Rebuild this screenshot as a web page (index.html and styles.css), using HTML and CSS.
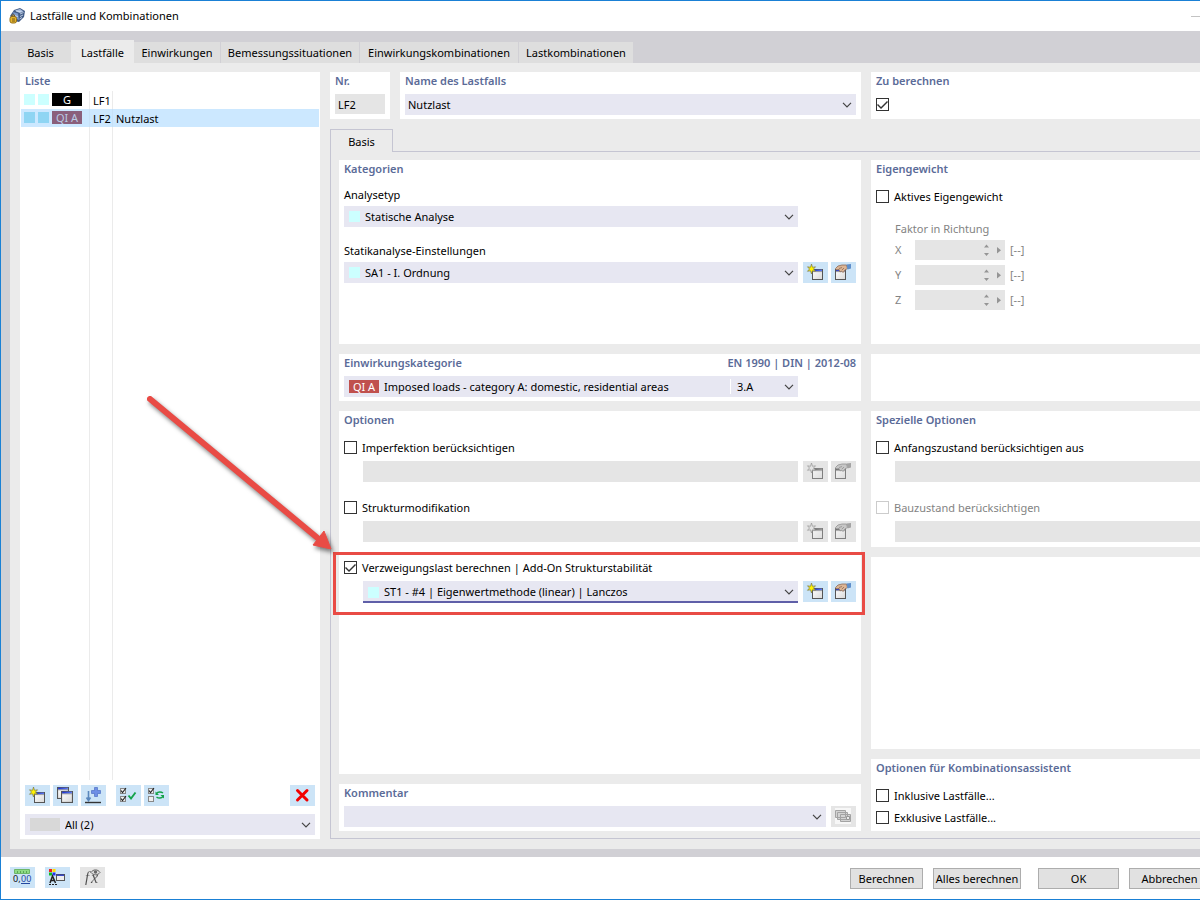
FILE: index.html
```html
<!DOCTYPE html>
<html lang="de">
<head>
<meta charset="utf-8">
<title>Lastfälle und Kombinationen</title>
<link rel="stylesheet" href="styles.css">
</head>
<body>
<svg class="defs" aria-hidden="true">
  <defs>
    <linearGradient id="face" x1="0" y1="0" x2="1" y2="1">
      <stop offset="0" stop-color="#ffffff"/><stop offset="1" stop-color="#d8d8d8"/>
    </linearGradient>
    <linearGradient id="bar" x1="0" y1="0" x2="1" y2="0">
      <stop offset="0" stop-color="#1c2fd0"/><stop offset="1" stop-color="#5c7cf4"/>
    </linearGradient>
    <symbol id="win" viewBox="0 0 11 11">
      <rect x=".5" y=".5" width="10" height="10" fill="url(#face)" stroke="#555"/>
      <path d="M1 .6h9v1.700H1z" fill="url(#bar)"/>
      <path d="M1 2.600h9" stroke="#777" stroke-width=".6"/>
    </symbol>
    <symbol id="i-new" viewBox="0 0 25 21">
      <use href="#win" x="9" y="7" width="11" height="11"/>
      <path d="M8.500 2 9.500 5.300 12.500 4.800 10.500 7 12.500 9.300 9.500 8.800 8.500 12 7.500 8.800 4.500 9.300 6.500 7 4.500 4.800 7.500 5.300z" fill="#fff200" stroke="#77774c" stroke-width=".7"/>
    </symbol>
    <symbol id="i-edit" viewBox="0 0 25 21">
      <use href="#win" x="4" y="7" width="11" height="11"/>
      <path d="M4.500 6.500 7 4 11 3 15.500 3 16.500 6.500 14 8 12 10.500 10.500 9 9 10 8 7.500 5.500 8z" fill="#dcb595" stroke="#8d6b55" stroke-width=".8"/>
      <path d="M8 6.500 11 5.500M11 8 13 6" stroke="#8d6b55" stroke-width=".8"/>
      <path d="M15.500 2.500 20 2v4.500l-3.500 1z" fill="#5f8fca"/>
    </symbol>
    <symbol id="i-copy" viewBox="0 0 25 21">
      <use href="#win" x="4" y="2" width="12" height="12"/>
      <use href="#win" x="8" y="6" width="12" height="12"/>
    </symbol>
    <symbol id="i-add" viewBox="0 0 25 21">
      <path d="M7.500 6v9M5.500 12.500 7.500 15.500 9.500 12.500" fill="none" stroke="#5a87bd" stroke-width="1.600"/>
      <path d="M13.500 2.500h3v3h3v3h-3v3h-3v-3h-3v-3h3z" fill="#6e8fe6" stroke="#4f70c4" stroke-width=".7"/>
      <path d="M4 17.500h16" stroke="#333" stroke-width="1.400"/>
    </symbol>
    <symbol id="box" viewBox="0 0 7 7"><rect x=".5" y=".5" width="5" height="5" fill="#eee" stroke="#888"/></symbol>
    <symbol id="i-all" viewBox="0 0 25 21">
      <use href="#box" x="4" y="3" width="7" height="7"/><use href="#box" x="4" y="11" width="7" height="7"/>
      <path d="M5 5.500 6.500 7.500 10 3M5 13.500 6.500 15.500 10 11" fill="none" stroke="#222" stroke-width="1.100"/>
      <path d="M12.500 10.500 15 13.500 19.500 7.500" fill="none" stroke="#13a34a" stroke-width="1.900"/>
    </symbol>
    <symbol id="i-invert" viewBox="0 0 25 21">
      <use href="#box" x="4" y="3" width="7" height="7"/><use href="#box" x="4" y="11" width="7" height="7"/>
      <path d="M5 5.500 6.500 7.500 10 3" fill="none" stroke="#222" stroke-width="1.100"/>
      <path d="M12.500 8.500C14 6.500 17 6.500 19 8M19 11.500C17.500 13.500 14.500 13.500 12.500 12" fill="none" stroke="#13a34a" stroke-width="1.500"/>
      <path d="M11.500 6.500v3.500h3.500zM20 13.500V10h-3.500z" fill="#13a34a"/>
    </symbol>
    <symbol id="i-delete" viewBox="0 0 25 21">
      <path d="M7.500 5.500 17 15M17 5.500 7.500 15" stroke="#f20000" stroke-width="3" stroke-linecap="round"/>
    </symbol>
    <symbol id="i-cards" viewBox="0 0 25 21">
      <path d="M4 2h16v16H4z" fill="#fff"/>
      <path d="M4.500 4.500h10v7h-10zM6.500 6.500h10v7h-10zM9.500 8.500h10v7h-10z" fill="#ccc" stroke="#888"/>
      <path d="M15.500 10.500h3v3h-3z" fill="#eee" stroke="#777"/>
    </symbol>
    <symbol id="chev" viewBox="0 0 10 6"><path d="M1 .8 5 4.800 9 .8" fill="none" stroke="#444" stroke-width="1.200"/></symbol>
    <symbol id="spin" viewBox="0 0 20 14">
      <path d="M0 4.500h5L2.500 1.500zM0 10h5l-2.500 3zM13 4v6.500l4-3.200z" fill="#959595"/>
    </symbol>
  </defs>
</svg>

<div class="dialog">
  <header class="titlebar">
    <svg class="logo" width="16" height="16" viewBox="0 0 16 16">
      <path d="M5 2 11 0 16 3 15 9 10 14 5 13 1 8z" fill="#435d88"/>
      <path d="M6 2.500 11 1 14.500 3.500 10.500 5z" fill="#a9bedf"/>
      <path d="M4 4 9 5.500 10 12 6 10z" fill="#7e9bcb"/>
      <path d="M11 6 14.500 4.500M11 8.500 14 7M10.500 11 13 9.500M3 7 9 8.500M7 3 12.500 4" stroke="#dbe5f5" stroke-width=".8"/>
      <rect x="1" y="8.500" width="6.500" height="6.500" rx="2" fill="#e5b52c" stroke="#94701a"/>
      <path d="M3 8.500V7h2.500v1.500M3 11h3M3 13h3" fill="none" stroke="#76581a"/>
    </svg>
    <h1 class="caption">Lastfälle und Kombinationen</h1>
    <button class="minimize" aria-label="Minimieren"></button>
  </header>

  <nav class="tabs">
    <button class="tab t-basis">Basis</button>
    <button class="tab active">Lastfälle</button>
    <button class="tab t-einw">Einwirkungen</button>
    <button class="tab t-bem">Bemessungssituationen</button>
    <button class="tab t-komb">Einwirkungskombinationen</button>
    <button class="tab t-last">Lastkombinationen</button>
  </nav>

  <main class="content">
    <section class="card list">
      <h2 class="title">Liste</h2>
      <table class="cases">
        <tbody>
          <tr><td class="c-type"><div class="marks"><i class="mark"></i><i class="mark"></i><span class="tag tag-g">G</span></div></td><td class="c-no">LF1</td><td class="c-name"></td></tr>
          <tr class="selected"><td class="c-type"><div class="marks"><i class="mark"></i><i class="mark"></i><span class="tag tag-q">QI A</span></div></td><td class="c-no">LF2</td><td class="c-name">Nutzlast</td></tr>
          <tr class="rest"><td class="c-type"></td><td class="c-no"></td><td class="c-name"></td></tr>
        </tbody>
      </table>
      <div class="tools">
        <button class="ib" aria-label="Neu"><svg><use href="#i-new"/></svg></button>
        <button class="ib" aria-label="Kopieren"><svg><use href="#i-copy"/></svg></button>
        <button class="ib" aria-label="Hinzufügen"><svg><use href="#i-add"/></svg></button>
        <button class="ib apart" aria-label="Alle auswählen"><svg><use href="#i-all"/></svg></button>
        <button class="ib" aria-label="Auswahl umkehren"><svg><use href="#i-invert"/></svg></button>
        <button class="ib last" aria-label="Löschen"><svg><use href="#i-delete"/></svg></button>
      </div>
      <div class="combo"><i class="block"></i><select aria-label="Filter"><option>All (2)</option></select><svg class="chev"><use href="#chev"/></svg></div>
    </section>

    <div class="detail">
      <div class="head">
        <section class="card">
          <label class="title" for="nr">Nr.</label>
          <input id="nr" class="number" value="LF2" readonly>
        </section>
        <section class="card">
          <label class="title" for="name">Name des Lastfalls</label>
          <div class="combo"><select id="name"><option>Nutzlast</option></select><svg class="chev"><use href="#chev"/></svg></div>
        </section>
        <section class="card">
          <label class="title" for="calc">Zu berechnen</label>
          <div class="single"><input type="checkbox" id="calc" checked></div>
        </section>
      </div>

      <div class="subtabs"><button class="subtab">Basis</button></div>

      <div class="frame">
        <div class="col">
          <section class="card tall">
            <h2 class="title">Kategorien</h2>
            <div class="fields">
              <div class="field">
                <label for="typ">Analysetyp</label>
                <div class="row wide"><div class="combo"><i class="mark"></i><select id="typ"><option>Statische Analyse</option></select><svg class="chev"><use href="#chev"/></svg></div></div>
              </div>
              <div class="field">
                <label for="sa">Statikanalyse-Einstellungen</label>
                <div class="row">
                  <div class="combo"><i class="mark"></i><select id="sa"><option>SA1 - I. Ordnung</option></select><svg class="chev"><use href="#chev"/></svg></div>
                  <div class="pair"><button class="ib" aria-label="Neu"><svg><use href="#i-new"/></svg></button><button class="ib" aria-label="Bearbeiten"><svg><use href="#i-edit"/></svg></button></div>
                </div>
              </div>
            </div>
          </section>

          <section class="card">
            <div class="title split"><label for="cat">Einwirkungskategorie</label><span>EN 1990 | DIN | 2012-08</span></div>
            <div class="row wide"><div class="combo"><span class="tag tag-red">QI A</span><select id="cat"><option>Imposed loads - category A: domestic, residential areas</option></select><span class="code">3.A</span><svg class="chev"><use href="#chev"/></svg></div></div>
          </section>

          <section class="card grow">
            <h2 class="title">Optionen</h2>
            <div class="options">
              <div class="option">
                <label class="check"><input type="checkbox">Imperfektion berücksichtigen</label>
                <div class="row indent">
                  <select class="blank" aria-label="Imperfektion" disabled></select>
                  <div class="pair"><button class="ib" disabled aria-label="Neu"><svg><use href="#i-new"/></svg></button><button class="ib" disabled aria-label="Bearbeiten"><svg><use href="#i-edit"/></svg></button></div>
                </div>
              </div>
              <div class="option">
                <label class="check"><input type="checkbox">Strukturmodifikation</label>
                <div class="row indent">
                  <select class="blank" aria-label="Strukturmodifikation" disabled></select>
                  <div class="pair"><button class="ib" disabled aria-label="Neu"><svg><use href="#i-new"/></svg></button><button class="ib" disabled aria-label="Bearbeiten"><svg><use href="#i-edit"/></svg></button></div>
                </div>
              </div>
              <div class="option">
                <label class="check"><input type="checkbox" checked>Verzweigungslast berechnen | Add-On Strukturstabilität</label>
                <div class="row indent">
                  <div class="combo focus"><i class="mark"></i><select aria-label="Stabilitätsanalyse"><option>ST1 - #4 | Eigenwertmethode (linear) | Lanczos</option></select><svg class="chev"><use href="#chev"/></svg></div>
                  <div class="pair"><button class="ib" aria-label="Neu"><svg><use href="#i-new"/></svg></button><button class="ib" aria-label="Bearbeiten"><svg><use href="#i-edit"/></svg></button></div>
                </div>
                <div class="callout"></div>
                <svg class="arrow" viewBox="0 0 200 170" aria-hidden="true">
                  <path d="M10 10 180 151" stroke="#e94b45" stroke-width="6" stroke-linecap="round"/>
                  <path d="M191 160 173 156 184 142z" fill="#e94b45" stroke="#e94b45"/>
                </svg>
              </div>
            </div>
          </section>

          <section class="card">
            <label class="title" for="note">Kommentar</label>
            <div class="row">
              <div class="combo"><select id="note"><option></option></select><svg class="chev"><use href="#chev"/></svg></div>
              <button class="ib" disabled aria-label="Kommentare"><svg><use href="#i-cards"/></svg></button>
            </div>
          </section>
        </div>

        <div class="col">
          <section class="card tall">
            <h2 class="title">Eigengewicht</h2>
            <div class="options">
              <label class="check"><input type="checkbox">Aktives Eigengewicht</label>
            </div>
            <div class="factors">
              <p class="hint">Faktor in Richtung</p>
              <div class="factor"><label for="fx">X</label><div class="spin"><input id="fx" disabled><svg><use href="#spin"/></svg></div><span>[--]</span></div>
              <div class="factor"><label for="fy">Y</label><div class="spin"><input id="fy" disabled><svg><use href="#spin"/></svg></div><span>[--]</span></div>
              <div class="factor"><label for="fz">Z</label><div class="spin"><input id="fz" disabled><svg><use href="#spin"/></svg></div><span>[--]</span></div>
            </div>
          </section>
          <section class="card short"></section>
          <section class="card special">
            <h2 class="title">Spezielle Optionen</h2>
            <div class="options">
              <div class="option">
                <label class="check"><input type="checkbox">Anfangszustand berücksichtigen aus</label>
                <div class="row indent"><select class="blank" aria-label="Anfangszustand" disabled></select></div>
              </div>
              <div class="option">
                <label class="check off"><input type="checkbox" disabled>Bauzustand berücksichtigen</label>
                <div class="row indent"><select class="blank" aria-label="Bauzustand" disabled></select></div>
              </div>
            </div>
          </section>
          <section class="card grow"></section>
          <section class="card">
            <h2 class="title">Optionen für Kombinationsassistent</h2>
            <div class="options tight">
              <label class="check"><input type="checkbox">Inklusive Lastfälle...</label>
              <label class="check"><input type="checkbox">Exklusive Lastfälle...</label>
            </div>
          </section>
        </div>
      </div>
    </div>
  </main>

  <footer class="footer">
    <div class="foot-tools">
      <button class="ib" aria-label="Einheiten und Dezimalstellen">
        <svg viewBox="0 0 25 21"><path d="M4.500 2.500h15v4h-15z" fill="#8edb86" stroke="#6cb768"/><path d="M7.500 4v2M10.500 4v2M13.500 4v2M16.500 4v2" stroke="#5aa657"/><text x="3" y="15" class="g-num">0,</text><text x="11" y="15" class="g-num g-blue">00</text><path d="M11 16.500h9" stroke="#2548a0"/></svg>
      </button>
      <button class="ib" aria-label="Anzeige">
        <svg viewBox="0 0 25 21"><path d="M4 2h3v3H4z" fill="#e22"/><path d="M7.500 2h3v3h-3z" fill="#fd0"/><path d="M4 5.500h3v3H4z" fill="#1b2"/><path d="M7.500 5.500h3v3h-3z" fill="#23e"/><path d="M5 16 7.500 9 10.500 16M6 13.500h4" fill="none" stroke="#222" stroke-width="1.500"/><path d="M4 17.500h9" stroke="#222" stroke-dasharray="2 1"/><rect x="11.500" y="7.500" width="8" height="6" fill="#eee" stroke="#555"/><path d="M12 8.200h7" stroke="#2638c0" stroke-width="1.400"/></svg>
      </button>
      <button class="ib" disabled aria-label="Formel">
        <svg viewBox="0 0 25 21"><text x="5" y="15" class="g-fx">f</text><text x="11" y="16" class="g-fx g-x">x</text><path d="M11 5.500C13 2 18 2 20 5.500 18 8.500 13 8.500 11 5.500z" fill="#ddd" stroke="#333"/><circle cx="15.500" cy="5" r="1.700" fill="#333"/></svg>
      </button>
    </div>
    <div class="actions">
      <button class="btn b-calc">Berechnen</button>
      <button class="btn b-all">Alles berechnen</button>
      <button class="btn b-ok">OK</button>
      <button class="btn b-cancel">Abbrechen</button>
    </div>
  </footer>
</div>
</body>
</html>
```
FILE: styles.css
```css
* { box-sizing: border-box; }

body {
  margin: 0;
  overflow: hidden;
  font: 11px/18px "Noto Sans", "Open Sans", sans-serif;
  color: #000;
}

button, input, select { font: inherit; color: inherit; margin: 0; padding: 0; border: 0; border-radius: 0; }
h1, h2, p { margin: 0; font: inherit; }
svg { display: block; }
.defs { position: absolute; width: 0; height: 0; }

/* The dialog runs on past the right edge of the window. */
.dialog {
  display: flex;
  flex-direction: column;
  width: calc(100% + 40px);
  min-height: 100vh;
  border: 1px solid #1a80d5;
  background: #d1d0d5;
}

.titlebar { display: flex; align-items: center; height: 30px; padding: 0 38px 0 8px; background: #fff; }
.caption { flex: 1; margin-left: 5px; }
.minimize { width: 10px; height: 1px; background: #c3c3c3; }

.tabs { display: flex; align-items: flex-end; height: 32px; padding-left: 9px; }
.tab { height: 21px; background: #dedede; border-right: 1px solid #d1d0d5; white-space: nowrap; }
.t-basis { width: 61px; border-right: 0; }
.t-einw { width: 87px; }
.t-bem { width: 139px; }
.t-komb { width: 159px; }
.t-last { width: 115px; }
.tab.active { width: 63px; height: 23px; padding-top: 2px; background: #ebebeb; border-right: 0; }

.content { flex: 1; display: flex; gap: 10px; margin: 0 0 8px 9px; padding: 9px 9px 10px 10px; background: #ebebeb; }

.card { display: flex; flex-direction: column; padding: 0 5px 4px; background: #fff; min-width: 0; }
.title { display: block; margin-bottom: 4px; font-weight: 600; color: #5b6b98; white-space: nowrap; }
.split { display: flex; justify-content: space-between; }
.tall { min-height: 184px; }
.short { min-height: 47px; }
.special { padding-bottom: 5px; }
.grow { flex: 1; }

.list { width: 300px; }
.list .title { margin-bottom: 1px; }
.cases { flex: 1; display: flex; flex-direction: column; margin: 0 -4px 5px; }
.cases tbody { flex: 1; display: flex; flex-direction: column; }
.cases tr { display: flex; height: 18px; }
.cases .rest { flex: 1; }
.cases td { padding: 1px 0 0 3px; }
.cases .c-type { width: 69px; padding: 2px 0 0 3px; border-right: 1px solid #ebebeb; }
.cases .c-no { width: 23px; border-right: 1px solid #ebebeb; }
.cases .c-name { flex: 1; }
.selected { background: #cce8ff; }
.cases .selected .c-type, .cases .selected .c-no { border-color: #c7e1f7; }
.marks { display: flex; gap: 3px; }
.mark { flex: none; width: 11px; height: 11px; background: #ccffff; }
.marks .mark { margin-top: 1px; }
.selected .mark { background: #8fd5f3; }
.tag { flex: none; width: 30px; height: 13px; line-height: 13px; text-align: center; }
.tag-g { background: #000; color: #fff; }
.tag-q { background: #8a5f7b; color: #b9cbe5; }
.tag-red { background: #c0504d; color: #fff; }

.tools { display: flex; gap: 3px; margin-bottom: 8px; }
.apart { margin-left: 7px; }
.last { margin-left: auto; }
.ib { flex: none; width: 25px; height: 21px; background: #cce4f7; }
.ib svg { width: 25px; height: 21px; }
.ib:disabled { background: #e5e5e5; }
.ib:disabled svg { filter: grayscale(1); opacity: .7; }

.combo { flex: none; display: flex; align-items: center; height: 21px; padding: 0 4px 0 3px; background: #e7e7f2; }
.row .combo { flex: 1; min-width: 0; padding-left: 5px; }
.combo select { flex: 1; min-width: 0; height: 21px; appearance: none; background: none; }
.combo .mark + select, .combo .tag + select { margin-left: 5px; }
.chev { flex: none; width: 10px; height: 6px; }
.block { width: 30px; height: 13px; margin: 0 5px 0 2px; background: #d8d8d8; }
.row .focus { height: 22px; margin-bottom: -1px; box-shadow: inset 0 -2px #5f5fa8; }
.code { width: 54px; height: 15px; line-height: 15px; padding-left: 6px; border-left: 1px solid #fff; }

.detail { flex: 1; min-width: 0; display: flex; flex-direction: column; }
.head { display: grid; grid-template-columns: 60px minmax(0, 461px) minmax(0, 1fr); gap: 10px; }
.number { width: 100%; height: 20px; padding-left: 3px; background: #e5e5e5; }
.single { display: flex; align-items: center; height: 21px; }

.subtabs { display: flex; height: 23px; margin-top: 10px; }
.subtabs::after { content: ""; flex: 1; border-bottom: 1px solid #c5c5d2; }
.subtab { width: 63px; padding-top: 2px; background: none; border: 1px solid #c5c5d2; border-bottom: 0; }
.frame {
  flex: 1;
  display: grid;
  grid-template-columns: minmax(0, 522px) minmax(0, 1fr);
  gap: 10px;
  padding: 8px 8px 7px;
  border: 1px solid #c5c5d2;
  border-top: 0;
}
.col { display: flex; flex-direction: column; gap: 10px; min-width: 0; }

.fields { display: flex; flex-direction: column; gap: 15px; margin-top: 4px; }
.field { display: flex; flex-direction: column; gap: 2px; }
.row { display: flex; gap: 5px; }
.wide { padding-right: 58px; }
.indent { padding-left: 19px; }
.pair { display: flex; gap: 3px; }
.blank { flex: 1; min-width: 0; height: 21px; appearance: none; background: #e5e5e5; opacity: 1; }

.options { display: flex; flex-direction: column; gap: 17px; margin-top: 6px; }
.tight { gap: 4px; }
.option { position: relative; display: flex; flex-direction: column; gap: 4px; }
.check { display: flex; align-items: center; gap: 5px; white-space: nowrap; }
.check input { margin-bottom: 1px; }
.off { color: #838383; }

input[type="checkbox"] { flex: none; width: 13px; height: 13px; appearance: none; border: 1px solid #333; background: #fff; }
input[type="checkbox"]:disabled { border-color: #ccc; }
input[type="checkbox"]:checked::before {
  content: "";
  display: block;
  width: 11px;
  height: 11px;
  background: #333;
  clip-path: polygon(0 6px, 1px 5px, 4px 8px, 10px 2px, 11px 3px, 4px 10px);
}

.factors { display: flex; flex-direction: column; gap: 5px; margin: 14px 0 0 19px; color: #838383; }
.hint { margin-bottom: -3px; }
.factor { display: flex; gap: 5px; height: 20px; align-items: center; }
.factor label { width: 15px; }
.spin { display: flex; align-items: center; width: 90px; height: 20px; background: #e5e5e5; }
.spin input { flex: 1; min-width: 0; height: 20px; background: none; }
.spin svg { width: 20px; height: 14px; margin-right: 1px; }

/* Annotation over the stability option */
.callout { position: absolute; inset: -7px -9px -13px -11px; border: 3px solid #e94b45; pointer-events: none; }
.arrow {
  position: absolute;
  left: -204px;
  top: -170px;
  width: 200px;
  height: 170px;
  pointer-events: none;
  filter: drop-shadow(2px 3px 2px rgba(0, 0, 0, .5));
}

.footer { display: flex; justify-content: space-between; height: 42px; padding: 10px 29px 0 9px; background: #fff; }
.foot-tools { display: flex; gap: 10px; }
.actions { display: flex; gap: 10px; padding-top: 1px; }
.btn { height: 21px; border: 1px solid #adadad; background: #e1e1e1; white-space: nowrap; }
.b-calc { width: 73px; }
.b-all { width: 88px; }
.b-ok { width: 81px; margin-left: 7px; }
.b-cancel { width: 81px; }

.g-num { font: 9px "Noto Sans", sans-serif; fill: #111; }
.g-blue { fill: #2548a0; }
.g-fx { font: italic 15px "Liberation Serif", serif; fill: #111; }
.g-x { font-size: 16px; }
```
